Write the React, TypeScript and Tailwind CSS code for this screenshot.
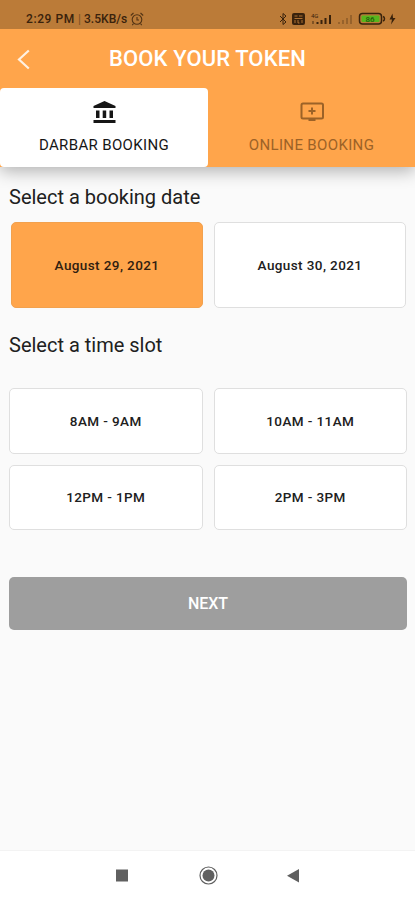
import type { ReactNode } from "react";

function StatusBar() {
  return (
    <div className="flex h-[29px] shrink-0 items-start justify-between bg-[#bb7b38] pl-[26px] pr-[19px] pt-[11px] text-[#39220c]">
      <div className="flex h-4 items-center whitespace-nowrap text-[12px] leading-4">
        <span className="font-medium tracking-[0.6px]">2:29 PM</span>
        <span className="mx-[3px] opacity-50">|</span>
        <span className="font-medium tracking-[0.05px]">3.5KB/s</span>
        <svg className="ml-[3px]" width="14" height="14" viewBox="0 0 14 14" fill="none" stroke="currentColor" strokeWidth="1.1" opacity=".8">
          <circle cx="7" cy="7.5" r="4.8" />
          <path d="M.8 3.5 3.5 1M13.2 3.5 10.500 1M7 5v3h2M3.5 11.5l-1.200 1.600M10.500 11.500l1.200 1.600" />
        </svg>
      </div>
      <svg width="118" height="16" viewBox="0 0 118 16" fill="none" stroke="currentColor">
        <path d="m2 5 6 6-3 2.500V2.500L8 5l-6 6" strokeWidth="1" />
        <rect x="14" y="2" width="13" height="12" rx="2" fill="currentColor" stroke="none" />
        <path d="M16.500 5h3M21 5h3.500M16.500 7.500h8M17 9v3M20 9v3h1.500M24 9v3" stroke="#bb7b38" strokeWidth=".9" />
        <text x="33" y="6.500" fontSize="6" fill="currentColor" stroke="none">4G</text>
        <path d="M35 13v-3" strokeWidth="1.500" opacity=".6" />
        <path d="M39.500 13v-2M43.500 13V9M47.500 13V7M52 13V4" strokeWidth="2" />
        <path d="M61 13v-2M65 13V9M69 13V7M73 13V4" strokeWidth="1.800" opacity=".3" />
        <rect x="81.500" y="2.500" width="22" height="10.500" rx="3" strokeWidth="1.500" />
        <path d="M105 5.500c2 .5 2 4 0 4.500" strokeWidth="1.500" />
        <rect x="83.500" y="4.500" width="18" height="6.500" rx="1" fill="#58b51c" stroke="none" />
        <text x="87.500" y="10.500" fontSize="8" fontWeight="500" fill="#245c0b" stroke="none">86</text>
        <path d="m114.500 2.500-3 6h2.500l-1 5 4.500-6.500H115z" fill="currentColor" stroke="none" />
      </svg>
    </div>
  );
}

function Header() {
  return (
    <div className="relative flex h-[59px] shrink-0 items-center justify-center text-white">
      <svg className="absolute left-[16px] top-[20px]" width="15" height="21" viewBox="0 0 15 21" fill="none" stroke="#fff1e2" strokeWidth="2.200">
        <path d="M12.800 1.500 3 10.500l9.800 9" />
      </svg>
      <h1 className="text-[22px] font-medium leading-7 tracking-[0.1px]">BOOK YOUR TOKEN</h1>
    </div>
  );
}

function Tabs() {
  return (
    <div className="flex h-[79px] shrink-0 text-[15px] leading-5 tracking-[0.35px]">
      <div className="flex w-[208px] flex-col items-center rounded-[4px] bg-white pt-[11px] text-[#161616]">
        <svg width="25" height="26" viewBox="0 0 25 26" fill="currentColor">
          <path d="M12.500 2 23.500 7v2H1.500V7zM4 11.500h3.500V19H4zM10.700 11.500h3.500V19h-3.500zM17.500 11.500H21V19h-3.500zM1.500 21h22v3h-22z" />
        </svg>
        <span className="mt-[10px] whitespace-nowrap">DARBAR BOOKING</span>
      </div>
      <div className="flex flex-1 flex-col items-center pt-[11px] text-[#9c6227]">
        <svg width="26" height="26" viewBox="0 0 26 26" fill="none" stroke="currentColor" strokeWidth="2">
          <rect x="2.500" y="4.500" width="21.500" height="15" rx="1.500" />
          <path d="M13 8.500v7M9.500 12h7M9.500 21h7" />
        </svg>
        <span className="mt-[10px] whitespace-nowrap">ONLINE BOOKING</span>
      </div>
    </div>
  );
}

function Choice({ children, selected = false }: { children: ReactNode; selected?: boolean }) {
  return (
    <button
      className={`flex items-center justify-center rounded-[5px] border text-[13.5px] font-medium leading-5 tracking-[0.4px] ${
        selected ? "border-[#f2a14e] bg-[#ffa54b] text-[#302010]" : "border-[#dfdfdf] bg-white text-[#202020]"
      }`}
    >
      {children}
    </button>
  );
}

function NavigationBar() {
  return (
    <div className="flex h-[50px] shrink-0 items-center justify-center border-t border-[#f3f3f3] bg-white text-[#606060]">
      <svg width="190" height="24" viewBox="0 0 190 24" fill="currentColor">
        <rect x="3" y="5.500" width="12" height="12" />
        <circle cx="95.500" cy="11.500" r="8.500" fill="none" stroke="currentColor" strokeWidth="1.200" />
        <circle cx="95.500" cy="11.500" r="6" />
        <path d="M186 5v13.500l-12-6.800z" />
      </svg>
    </div>
  );
}

export default function App() {
  return (
    <div className="flex h-[900px] w-[415px] flex-col overflow-hidden bg-[#fafafa] font-['Roboto',sans-serif] text-[#202020]">
      <header className="shrink-0 bg-[#ffa54b] shadow-[0_4px_16px_rgba(0,0,0,0.3)]">
        <StatusBar />
        <Header />
        <Tabs />
      </header>
      <main className="flex flex-1 flex-col pl-[9px] pr-2 pt-[16px]">
        <h2 className="text-[20px] leading-7">Select a booking date</h2>
        <section className="ml-[2px] mr-[1px] mt-[11px] grid h-[86px] grid-cols-2 gap-[11px]">
          <Choice selected>August 29, 2021</Choice>
          <Choice>August 30, 2021</Choice>
        </section>
        <h2 className="mt-[23px] text-[20px] leading-7">Select a time slot</h2>
        <section className="mt-[29px] grid h-[142px] grid-cols-2 grid-rows-2 gap-[11px]">
          <Choice>8AM - 9AM</Choice>
          <Choice>10AM - 11AM</Choice>
          <Choice>12PM - 1PM</Choice>
          <Choice>2PM - 3PM</Choice>
        </section>
        <button className="mt-[47px] flex h-[53px] items-center justify-center rounded-[5px] bg-[#9e9e9e] text-[16px] font-medium text-white">
          NEXT
        </button>
      </main>
      <NavigationBar />
    </div>
  );
}
